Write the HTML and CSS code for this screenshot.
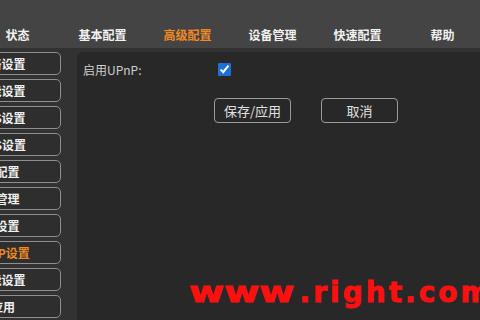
FILE: index.html
```html
<!DOCTYPE html>
<html lang="zh-CN">
<head>
    <meta charset="UTF-8">
    <meta name="viewport" content="width=device-width, initial-scale=1.0">
    <title>高级配置 - UPnP设置</title>
    <link rel="stylesheet" href="styles.css">
</head>
<body>
    <header class="topbar">
        <nav class="menu">
            <a href="#">状态</a>
            <a href="#">基本配置</a>
            <a href="#" class="active">高级配置</a>
            <a href="#">设备管理</a>
            <a href="#">快速配置</a>
            <a href="#">帮助</a>
        </nav>
    </header>
    <div class="content">
        <aside class="sidebar">
            <a href="#" class="side-btn">网络设置</a>
            <a href="#" class="side-btn">功能设置</a>
            <a href="#" class="side-btn">QoS设置</a>
            <a href="#" class="side-btn">DNS设置</a>
            <a href="#" class="side-btn">IP配置</a>
            <a href="#" class="side-btn">组管理</a>
            <a href="#" class="side-btn">IP设置</a>
            <a href="#" class="side-btn active">UPnP设置</a>
            <a href="#" class="side-btn">智能设置</a>
            <a href="#" class="side-btn last">应用</a>
        </aside>
        <main class="panel">
            <div class="form-row">
                <label for="upnp">启用UPnP:</label>
                <input type="checkbox" id="upnp" checked>
            </div>
            <div class="actions">
                <button class="btn">保存/应用</button>
                <button class="btn">取消</button>
            </div>
        </main>
    </div>
    <div class="watermark"><span class="www">www</span>.right.com</div>
</body>
</html>
```

FILE: styles.css
```css
body {
    margin: 0;
    padding: 0;
    background: #323232;
    color: #fff;
    font-family: "Noto Sans CJK SC", "Noto Sans", sans-serif;
    overflow: hidden;
    height: 320px;
    position: relative;
}
.topbar {
    height: 48px;
    background: #444;
}
.menu {
    display: flex;
    margin-left: -25px;
    padding-top: 26px;
}
.menu a {
    width: 85px;
    flex: none;
    text-align: center;
    color: #f2f2f2;
    text-decoration: none;
    font-size: 12px;
    font-weight: bold;
    line-height: 18px;
}
.menu a.active {
    color: #f08a24;
}
.content {
    display: flex;
    padding-top: 4px;
    height: 268px;
}
.sidebar {
    display: flex;
    flex-direction: column;
    gap: 4px;
    width: 119px;
    margin-left: -58px;
    flex: none;
}
.side-btn {
    height: 21px;
    border: 1px solid #8e8e8e;
    border-radius: 5px;
    background: #2e2e2e;
    color: #f0f0f0;
    text-decoration: none;
    font-size: 12px;
    font-weight: bold;
    line-height: 21px;
    text-align: center;
}
.side-btn.active {
    color: #f08a24;
}
.side-btn.last {
    padding-left: 3px;
}
.panel {
    flex: 1;
    margin-left: 16px;
    background: #282828;
    border-radius: 6px 0 0 0;
    padding: 9px 6px;
}
.form-row {
    display: flex;
    align-items: center;
    height: 16px;
}
.form-row label {
    width: 135px;
    font-size: 12px;
    color: #cfcfcf;
}
.form-row input {
    margin: 0;
    width: 13px;
    height: 13px;
    accent-color: #1d6fd8;
}
.actions {
    display: flex;
    gap: 30px;
    margin-top: 21px;
    padding-left: 131px;
}
.btn {
    width: 77px;
    height: 25px;
    background: transparent;
    border: 1px solid #9a9a9a;
    border-radius: 4px;
    color: #e0e0e0;
    font-family: "Noto Sans CJK SC", sans-serif;
    font-size: 13px;
    padding: 0;
}
.watermark {
    position: absolute;
    left: 189px;
    top: 276px;
    font-family: "DejaVu Sans", sans-serif;
    font-weight: bold;
    font-size: 28px;
    color: #ff1010;
    -webkit-text-stroke: 0.8px #ff1010;
    letter-spacing: 3px;
    white-space: nowrap;
}
.watermark .www {
    display: inline-block;
    letter-spacing: 0;
    transform: scaleX(1.36);
    transform-origin: left;
    margin-right: 33px;
}
```
